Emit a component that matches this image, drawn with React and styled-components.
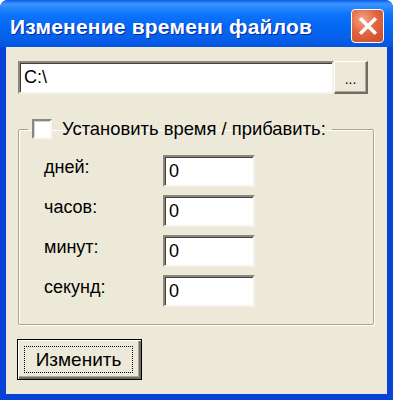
import React from 'react';
import styled, { createGlobalStyle } from 'styled-components';

const Global = createGlobalStyle`
    html, body {
        margin: 0;
        padding: 0;
        background: #ffffff;
    }
    body {
        font-family: "Liberation Sans", Arial, sans-serif;
    }
`;

const Window = styled.div`
    width: 393px;
    height: 400px;
    box-sizing: border-box;
    display: flex;
    flex-direction: column;
    background: #0842d6;
    border-radius: 8px 8px 0 0;
    padding: 0 6px 6px;
    overflow: hidden;
`;

const TitleBar = styled.div`
    height: 47px;
    margin: 0 -6px;
    padding: 0 9px 0 10px;
    display: flex;
    align-items: center;
    justify-content: space-between;
    background: linear-gradient(
        to bottom,
        #0a5ae8 0%,
        #3d95ff 8%,
        #2a8aff 16%,
        #0f74fb 30%,
        #0468f5 55%,
        #0660ea 80%,
        #0454e0 100%
    );
`;

const Title = styled.span`
    color: #ffffff;
    font-family: "Liberation Sans", Arial, sans-serif;
    font-weight: bold;
    font-size: 21px;
    letter-spacing: 0.2px;
    margin-top: 6px;
    text-shadow: 1px 1px 0 #0a2a9a;
`;

const CloseButton = styled.div`
    width: 33px;
    height: 34px;
    box-sizing: border-box;
    border: 1px solid #ffffff;
    border-radius: 4px;
    background: radial-gradient(circle at 35% 30%, #f3a58b 0%, #e2663f 45%, #c84a26 100%);
    display: flex;
    align-items: center;
    justify-content: center;
    margin-top: 5px;
`;

const Body = styled.div`
    flex: 1;
    background: #ece9d8;
    padding: 14px 12px 0 12px;
    display: flex;
    flex-direction: column;
`;

const PathRow = styled.div`
    display: flex;
    width: 350px;
    height: 33px;
`;

const Sunken = styled.div`
    box-sizing: border-box;
    height: ${p => p.$h || 32}px;
    width: ${p => (p.$w ? `${p.$w}px` : 'auto')};
    flex: ${p => (p.$grow ? 1 : 'none')};
    background: #ffffff;
    border-top: 2px solid #8a877c;
    border-left: 2px solid #8a877c;
    border-bottom: 2px solid #f4f2ea;
    border-right: 2px solid #f4f2ea;
    box-shadow: inset 1px 1px 0 #404040;
    padding-left: 4px;
    display: flex;
    align-items: center;
    font-size: 18px;
    color: #000000;
`;

const SmallButton = styled.div`
    width: 34px;
    box-sizing: border-box;
    background: #ece9d8;
    border-top: 1px solid #ffffff;
    border-left: 1px solid #ffffff;
    border-right: 2px solid #6f6d66;
    border-bottom: 2px solid #6f6d66;
    box-shadow: inset -1px -1px 0 #aca899;
    display: flex;
    align-items: center;
    justify-content: center;
    font-size: 14px;
    padding-top: 4px;
    color: #000;
`;

const Group = styled.fieldset`
    margin: 24px 1px 0 0;
    padding: 0 0 17px 0;
    width: 356px;
    box-sizing: border-box;
    border: 1px solid #a8a597;
    box-shadow: 1px 1px 0 #ffffff, inset 1px 1px 0 #ffffff;
    border-radius: 2px;
`;

const Legend = styled.legend`
    margin-left: 9px;
    padding: 0 6px 0 4px;
    display: flex;
    align-items: center;
    gap: 10px;
    font-size: 18.4px;
    color: #000;
    height: 22px;
`;

const Check = styled.span`
    width: 20px;
    height: 20px;
    box-sizing: border-box;
    background: #ffffff;
    border-top: 2px solid #8a877c;
    border-left: 2px solid #8a877c;
    border-bottom: 2px solid #f8f7f0;
    border-right: 2px solid #f8f7f0;
    box-shadow: inset 1px 1px 0 #d6d3c6;
`;

const Fields = styled.div`
    margin-top: 15px;
    padding-left: 25px;
    display: grid;
    grid-template-columns: 119px 92px;
    grid-auto-rows: 32px;
    row-gap: 8px;
    align-items: center;
`;

const Label = styled.span`
    font-size: 18px;
    color: #000;
    padding-bottom: 8px;
`;

const ActionButton = styled.div`
    margin: 14px 0 0 -1px;
    width: 125px;
    height: 41px;
    box-sizing: border-box;
    border: 1px solid #000000;
    background: #ece9d8;
    box-shadow: inset 1px 1px 0 #ffffff, inset -2px -2px 0 #6f6d66, inset -3px -3px 0 #aca899;
    padding: 6px 8px 6px 6px;
    display: flex;
`;

const Focus = styled.div`
    flex: 1;
    border: 1px dotted #000000;
    display: flex;
    align-items: center;
    justify-content: center;
    font-size: 19px;
    color: #000;
`;

const fields = ['дней:', 'часов:', 'минут:', 'секунд:'];

export default function App() {
    return (
        <>
            <Global />
            <Window>
                <TitleBar>
                    <Title>Изменение времени файлов</Title>
                    <CloseButton>
                        <svg width="22" height="22" viewBox="0 0 20 20">
                            <path d="M4 4 L16 16 M16 4 L4 16" stroke="#ffffff" strokeWidth="3.2" strokeLinecap="square" />
                        </svg>
                    </CloseButton>
                </TitleBar>
                <Body>
                    <PathRow>
                        <Sunken $grow $h={33}>C:\</Sunken>
                        <SmallButton>...</SmallButton>
                    </PathRow>
                    <Group>
                        <Legend>
                            <Check />
                            Установить время / прибавить:
                        </Legend>
                        <Fields>
                            {fields.map(name => (
                                <React.Fragment key={name}>
                                    <Label>{name}</Label>
                                    <Sunken $w={92}>0</Sunken>
                                </React.Fragment>
                            ))}
                        </Fields>
                    </Group>
                    <ActionButton>
                        <Focus>Изменить</Focus>
                    </ActionButton>
                </Body>
            </Window>
        </>
    );
}
